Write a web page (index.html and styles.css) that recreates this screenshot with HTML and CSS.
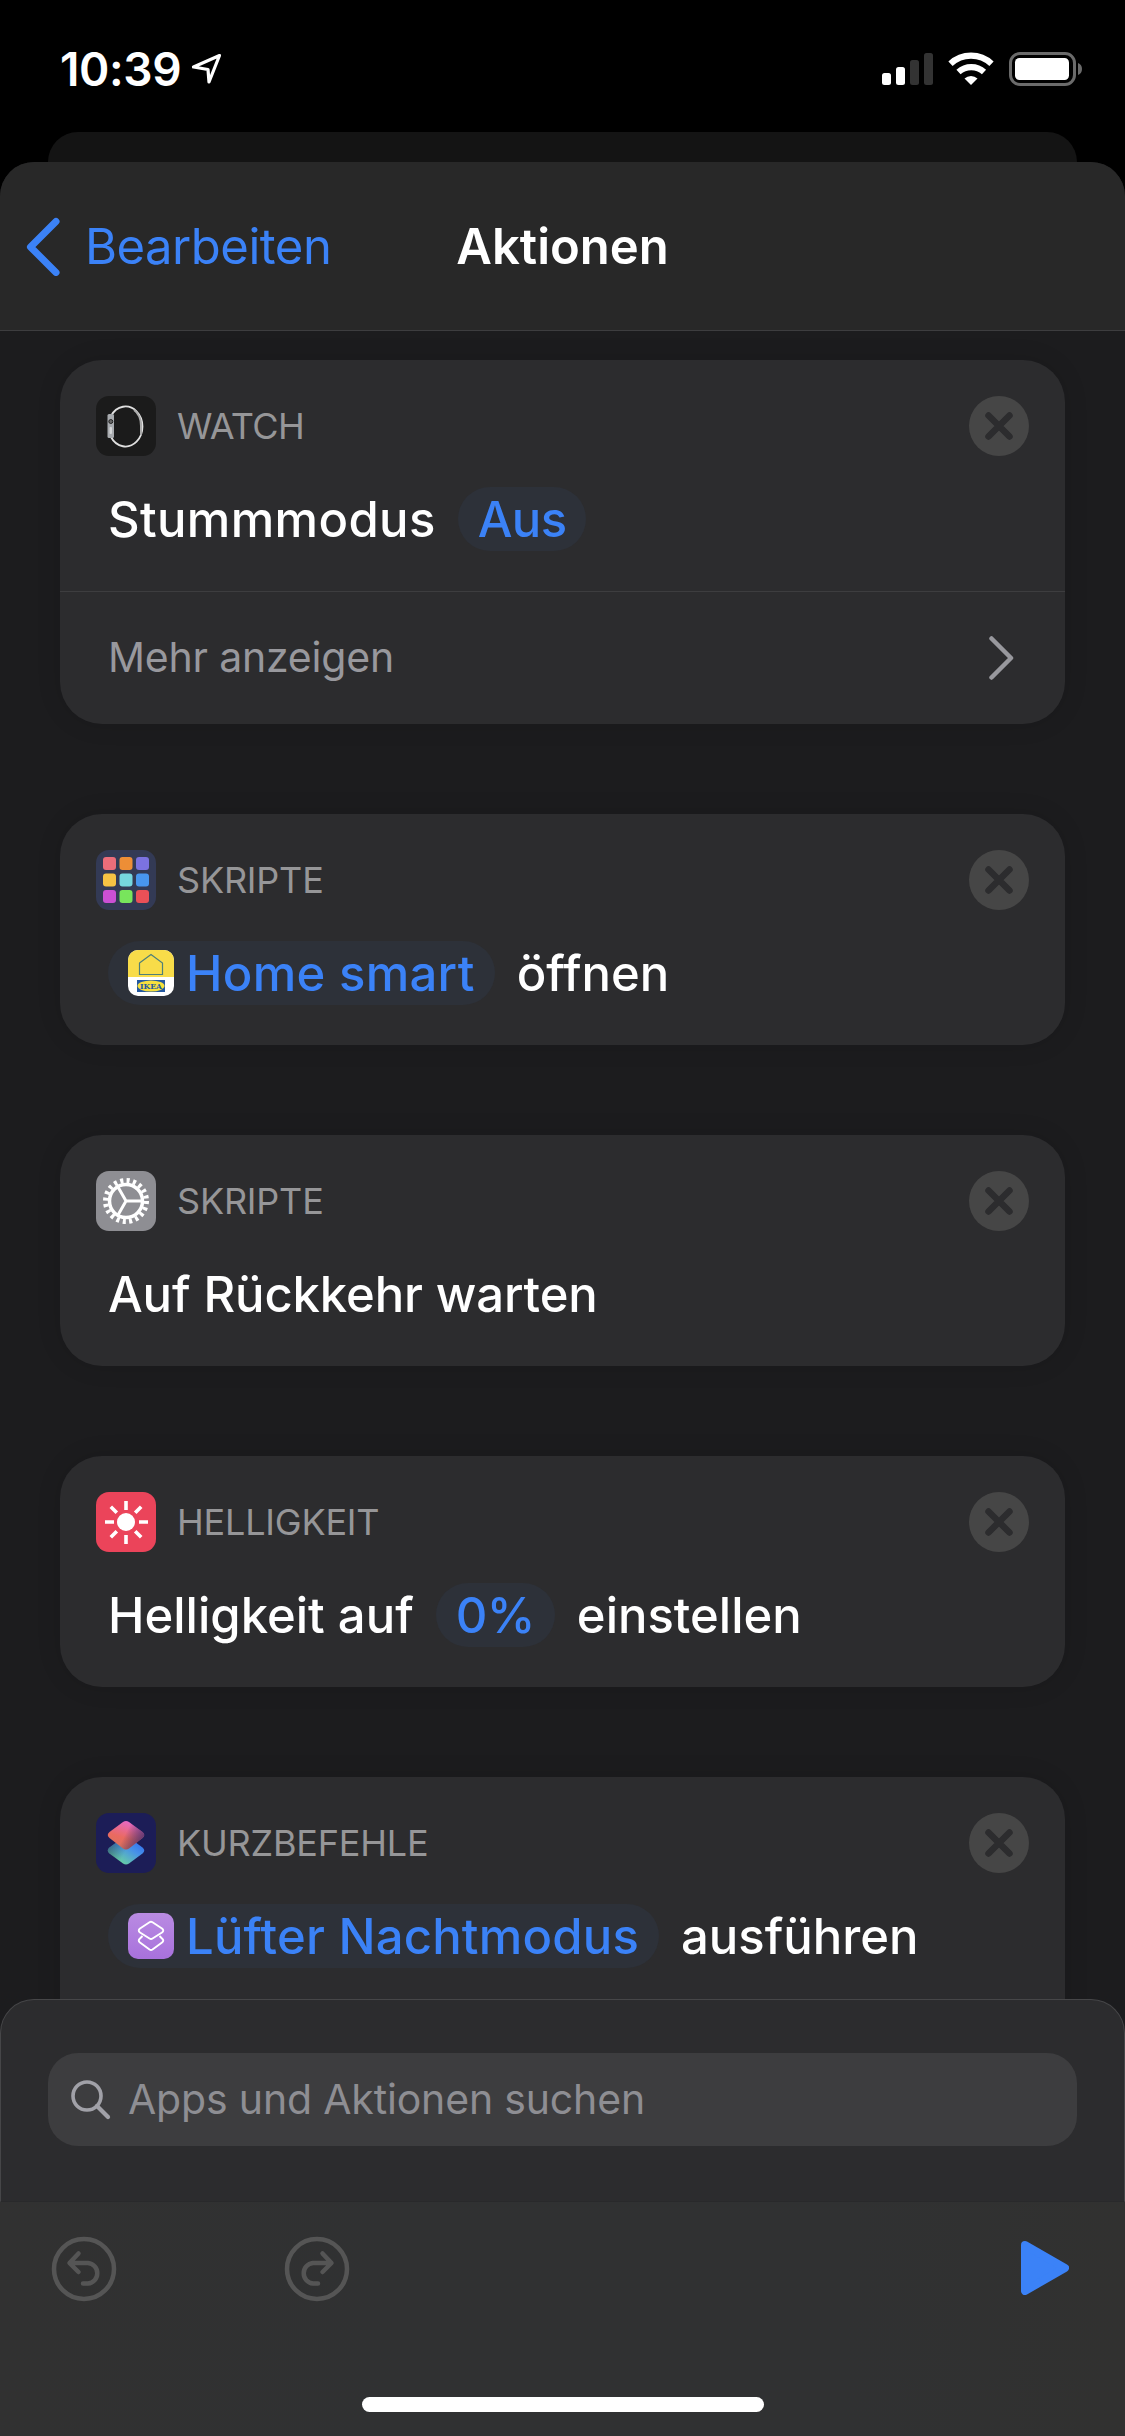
FILE: index.html
```
<!DOCTYPE html>
<html lang="de">
<head>
<meta charset="utf-8">
<title>Aktionen</title>
<link rel="stylesheet" href="styles.css">
</head>
<body>
<div class="screen">
  <div class="status">
    <div class="status-left">
      <span class="time">10:39</span>
      <svg class="loc" width="32" height="32" viewBox="0 0 32 32"><path d="M28.500 2.500 2.500 14 17 16.500 18 29Z" fill="none" stroke="#fff" stroke-width="3.200" stroke-linejoin="round"/></svg>
    </div>
    <svg class="status-right" width="202" height="36" viewBox="0 0 202 36">
      <rect x="0" y="21" width="9" height="12" rx="2.500" fill="#fff"/><rect x="14" y="15" width="9" height="18" rx="2.500" fill="#fff"/>
      <rect x="28" y="8" width="9" height="25" rx="2.500" fill="#333"/><rect x="42" y="1" width="9" height="32" rx="2.500" fill="#333"/>
      <g fill="none" stroke="#fff" stroke-width="6.200"><path d="M68.500 11.800a30 30 0 0 1 41 0"/><path d="M76.500 20a19 19 0 0 1 25.500 0"/></g>
      <path d="M89 33l-6.500-6.500a9.500 9.500 0 0 1 13 0z" fill="#fff"/>
      <rect x="128.500" y="1.500" width="64" height="31" rx="9.500" fill="none" stroke="#6b6b6b" stroke-width="3"/><rect x="133" y="6" width="54" height="22" rx="4.500" fill="#fff"/><path d="M196 11a6.500 6.500 0 0 1 0 12z" fill="#6b6b6b"/>
    </svg>
  </div>
  <div class="behind"></div>
  <div class="sheet">
    <header class="nav">
      <div class="back">
        <svg width="36" height="60" viewBox="0 0 36 60"><path d="M31 5.500 5.500 31 31 56.500" fill="none" stroke="#3b82f7" stroke-width="7" stroke-linecap="round" stroke-linejoin="round"/></svg>
        <span class="back-label">Bearbeiten</span>
      </div>
      <h1 class="title">Aktionen</h1>
    </header>
    <main class="list">
      <section class="card">
        <div class="card-head">
          <svg class="app" viewBox="0 0 60 60"><rect width="60" height="60" rx="13" fill="#1b1b1b"/><path d="M15 20A17 20 0 1 1 15 41" fill="none" stroke="#e0e0e0" stroke-width="1.800"/><path d="M38 14q7 5 7 16v9" fill="none" stroke="#aaa" stroke-width="2"/><rect x="11.500" y="18" width="6.500" height="24" rx="1.500" fill="#a8abaf"/><circle cx="14.800" cy="25.500" r="2" fill="#666" stroke="#222"/><rect x="13.500" y="31" width="2.500" height="7" rx="1" fill="#d4d6d8"/></svg>
          <span class="label w-watch">WATCH</span>
          <svg class="close" viewBox="0 0 60 60"><circle cx="30" cy="30" r="30" fill="#464646"/><path d="M19.500 19.500l21 21m0-21l-21 21" stroke="#2c2c2e" stroke-width="6.500" stroke-linecap="round"/></svg>
        </div>
        <div class="line"><span class="txt t-stumm">Stummmodus</span><span class="pill"><span class="txt t-aus">Aus</span></span></div>
        <div class="more"><span class="more-label">Mehr anzeigen</span><svg width="26" height="44" viewBox="0 0 26 44"><path d="M2.500 2.500 22 22 2.500 41.500" fill="none" stroke="#98989d" stroke-width="4.500" stroke-linecap="round" stroke-linejoin="round"/></svg></div>
      </section>
      <section class="card">
        <div class="card-head">
          <svg class="app" viewBox="0 0 60 60"><rect width="60" height="60" rx="13" fill="#333a55"/><rect x="7" y="7" width="13" height="13" rx="3" fill="#ec6d7a"/><rect x="23.500" y="7" width="13" height="13" rx="3" fill="#ed8e36"/><rect x="40" y="7" width="13" height="13" rx="3" fill="#7b72e0"/><rect x="7" y="23.500" width="13" height="13" rx="3" fill="#f6c344"/><rect x="23.500" y="23.500" width="13" height="13" rx="3" fill="#76d6df"/><rect x="40" y="23.500" width="13" height="13" rx="3" fill="#4896ef"/><rect x="7" y="40" width="13" height="13" rx="3" fill="#cb50d4"/><rect x="23.500" y="40" width="13" height="13" rx="3" fill="#78e55c"/><rect x="40" y="40" width="13" height="13" rx="3" fill="#eb5057"/></svg>
          <span class="label w-long">SKRIPTE</span>
          <svg class="close" viewBox="0 0 60 60"><circle cx="30" cy="30" r="30" fill="#464646"/><path d="M19.500 19.500l21 21m0-21l-21 21" stroke="#2c2c2e" stroke-width="6.500" stroke-linecap="round"/></svg>
        </div>
        <div class="line"><span class="pill pill-icon">
          <svg class="mini" viewBox="0 0 46 46"><defs><clipPath id="mini-clip"><rect width="46" height="46" rx="10"/></clipPath></defs><g clip-path="url(#mini-clip)"><rect width="46" height="46" fill="#fff"/><rect width="46" height="27" fill="#f8dc49"/></g><path d="M11.500 13 23 4.500 34.500 13V24.500H11.500Z" fill="none" stroke="#4f7f78" stroke-width="1.200"/><rect x="9" y="30" width="28" height="12" fill="#2358a0"/><ellipse cx="23" cy="36" rx="13.500" ry="5.500" fill="#f6df3d"/><text x="23" y="38.800" text-anchor="middle" textLength="22" lengthAdjust="spacingAndGlyphs" class="brand">IKEA</text></svg>
          <span class="txt t-home">Home smart</span></span><span class="txt">öffnen</span></div>
      </section>
      <section class="card">
        <div class="card-head">
          <svg class="app" viewBox="0 0 60 60"><rect width="60" height="60" rx="13" fill="#8e8e93"/><circle cx="30" cy="30" r="16.500" fill="none" stroke="#fff" stroke-width="3.500"/><circle cx="30" cy="30" r="20.500" fill="none" stroke="#fff" stroke-width="5" stroke-dasharray="3.100 3.340"/><path d="M46 30H30L22 16M30 30l-8 14" fill="none" stroke="#fff" stroke-width="3"/></svg>
          <span class="label w-long">SKRIPTE</span>
          <svg class="close" viewBox="0 0 60 60"><circle cx="30" cy="30" r="30" fill="#464646"/><path d="M19.500 19.500l21 21m0-21l-21 21" stroke="#2c2c2e" stroke-width="6.500" stroke-linecap="round"/></svg>
        </div>
        <div class="line"><span class="txt t-auf">Auf Rückkehr warten</span></div>
      </section>
      <section class="card">
        <div class="card-head">
          <svg class="app" viewBox="0 0 60 60"><rect width="60" height="60" rx="13" fill="#eb445a"/><circle cx="30" cy="30" r="9" fill="#fff"/><path d="M30 9v9M30 43v9M9 30h9M43 30h9M14.800 14.800l6 6M39.200 39.200l6 6M45.200 14.800l-6 6M20.800 39.200l-6 6" stroke="#fff" stroke-width="3.600"/></svg>
          <span class="label w-long">HELLIGKEIT</span>
          <svg class="close" viewBox="0 0 60 60"><circle cx="30" cy="30" r="30" fill="#464646"/><path d="M19.500 19.500l21 21m0-21l-21 21" stroke="#2c2c2e" stroke-width="6.500" stroke-linecap="round"/></svg>
        </div>
        <div class="line"><span class="txt">Helligkeit auf</span><span class="pill"><span class="txt t-null">0%</span></span><span class="txt">einstellen</span></div>
      </section>
      <section class="card card-last">
        <div class="card-head">
          <svg class="app" viewBox="0 0 60 60"><defs><linearGradient id="low" x1="1" y1="0.200" x2="0.300" y2="1"><stop offset="0" stop-color="#2f6bf0"/><stop offset=".4" stop-color="#4791e8"/><stop offset="1" stop-color="#6cd79a"/></linearGradient><linearGradient id="lowshade" x1="0" y1=".3" x2=".5" y2=".5"><stop offset="0" stop-color="#1e2a5a" stop-opacity=".6"/><stop offset="1" stop-color="#1e2a5a" stop-opacity="0"/></linearGradient><linearGradient id="top" x1="0.700" y1="0" x2="0.300" y2="1"><stop offset="0" stop-color="#e569cf"/><stop offset=".6" stop-color="#ea6a60"/><stop offset="1" stop-color="#d8735c"/></linearGradient><linearGradient id="shade" x1="0.500" y1=".4" x2="1" y2=".6"><stop offset="0" stop-color="#1e1e5a" stop-opacity="0"/><stop offset="1" stop-color="#3c2a6c" stop-opacity=".8"/></linearGradient></defs><rect width="60" height="60" rx="13" fill="#1c1d57"/><path id="rhomb-low" d="M27 24.500 13.500 34.500q-3.500 3 0 6L27 50.500q3 2 6 0L46.500 40.500q3.500-3 0-6L33 24.500q-3-2-6 0Z" fill="url(#low)"/><path d="M27 24.500 13.500 34.500q-3.500 3 0 6L27 50.500q3 2 6 0L46.500 40.500q3.500-3 0-6L33 24.500q-3-2-6 0Z" fill="url(#lowshade)"/><path d="M27 9 13.500 19q-3.500 3 0 6L27 35.500q3 2 6 0L46.500 25q3.500-3 0-6L33 9q-3-2-6 0Z" fill="url(#top)"/><path d="M27 9 13.500 19q-3.500 3 0 6L27 35.500q3 2 6 0L46.500 25q3.500-3 0-6L33 9q-3-2-6 0Z" fill="url(#shade)"/></svg>
          <span class="label w-long">KURZBEFEHLE</span>
          <svg class="close" viewBox="0 0 60 60"><circle cx="30" cy="30" r="30" fill="#464646"/><path d="M19.500 19.500l21 21m0-21l-21 21" stroke="#2c2c2e" stroke-width="6.500" stroke-linecap="round"/></svg>
        </div>
        <div class="line"><span class="pill pill-icon">
          <svg class="mini" viewBox="0 0 46 46"><defs><linearGradient id="lilac" x2="0" y2="1"><stop stop-color="#b98be2"/><stop offset="1" stop-color="#a871dc"/></linearGradient></defs><rect width="46" height="46" rx="10" fill="url(#lilac)"/><g fill="none" stroke="#fff" stroke-width="1.900" stroke-linejoin="round"><path d="M21.500 9.200 12 15.500q-2.500 2 0 4L21.500 25.500q1.500 1 3 0L34 19.500q2.500-2 0-4L24.500 9.200q-1.500-1-3 0Z"/><path d="M14.500 23 12 25.500q-2.500 2 0 4l9.500 7q1.500 1 3 0l9.500-7q2.500-2 0-4L31.500 23"/></g></svg>
          <span class="txt t-luft">Lüfter Nachtmodus</span></span><span class="txt">ausführen</span></div>
      </section>
    </main>
    <div class="drawer">
      <div class="search"><svg width="40" height="40" viewBox="0 0 40 40"><circle cx="16" cy="16" r="14" fill="none" stroke="#a1a1a8" stroke-width="3.600"/><path d="M26 26l11 11" stroke="#a1a1a8" stroke-width="4.200" stroke-linecap="round"/></svg><span class="placeholder">Apps und Aktionen suchen</span></div>
    </div>
    <footer class="toolbar">
      <div class="tools">
        <svg class="undo" width="66" height="66" viewBox="0 0 66 66"><g fill="none" stroke="#555" stroke-width="4.500" stroke-linecap="round" stroke-linejoin="round"><circle cx="33" cy="33" r="30"/><path d="M27.500 17.500 18.500 27l9 9M19 27h18a10.300 10.300 0 0 1 0 20.500h-5"/></g></svg>
        <svg class="redo" width="66" height="66" viewBox="0 0 66 66"><g fill="none" stroke="#555" stroke-width="4.500" stroke-linecap="round" stroke-linejoin="round"><circle cx="33" cy="33" r="30"/><path d="M38.500 17.500 47.500 27l-9 9M47 27H29a10.300 10.300 0 0 0 0 20.500h5"/></g></svg>
        <svg class="play" width="48" height="54" viewBox="0 0 48 54"><path d="M4 4 44 27 4 50Z" fill="#3b82f7" stroke="#3b82f7" stroke-width="8" stroke-linejoin="round"/></svg>
      </div>
      <div class="home"></div>
    </footer>
  </div>
</div>
</body>
</html>
```
FILE: styles.css
```
* { box-sizing: border-box; }
body { margin: 0; background: #000; font-family: Inter, "Liberation Sans", sans-serif; }
svg { display: block; flex: none; }
.screen { width: 1125px; height: 2436px; overflow: hidden; background: #000; display: flex; flex-direction: column; }
.status { height: 132px; flex: none; display: flex; justify-content: space-between; padding: 0 41px 0 60px; }
.status-left { display: flex; align-items: flex-start; padding-top: 39px; }
.time { font-size: 46px; line-height: 60px; font-weight: 600; letter-spacing: -0.4px; color: #fff; width: 131px; white-space: nowrap; }
.loc { margin-top: 14px; }
.status-right { margin-top: 52px; }
.behind { height: 30px; flex: none; margin: 0 48px; background: #141414; border-radius: 30px 30px 0 0; }
.sheet { flex: 1; min-height: 0; display: flex; flex-direction: column; background: #1c1c1e; border-radius: 34px 34px 0 0; overflow: hidden; }
.nav { height: 169px; flex: none; background: #282828; border-bottom: 1px solid #3d3d3f; display: grid; grid-template-columns: 1fr auto 1fr; align-items: center; padding: 0 25px; }
.back { display: flex; align-items: center; gap: 24px; color: #3b82f7; }
.back-label { font-size: 49px; line-height: 60px; letter-spacing: -0.5px; padding-top: 2px; white-space: nowrap; }
.title { margin: 0; padding-top: 2px; font-size: 49px; line-height: 60px; font-weight: 600; color: #fff; white-space: nowrap; }
.list { height: 1668px; flex: none; padding: 29px 60px 0; display: flex; flex-direction: column; gap: 90px; overflow: hidden; }
.card { flex: none; background: #2c2c2e; border-radius: 42px; box-shadow: 0 0 24px rgba(0,0,0,.12); overflow: hidden; }
.card-last { padding-bottom: 60px; }
.card-head { display: flex; align-items: center; padding: 36px 36px 0; }
.app, .close { width: 60px; height: 60px; }
.label { flex: 1; margin-left: 21px; font-size: 36px; line-height: 44px; color: #969698; white-space: nowrap; }
.w-watch { letter-spacing: -0.7px; }
.w-long { letter-spacing: -0.2px; }
.line { display: flex; align-items: center; height: 135px; padding: 0 48px 9px; gap: 22px; font-size: 49px; line-height: 60px; font-weight: 500; color: #fff; white-space: nowrap; }
.txt { padding-top: 2px; }
.t-stumm { letter-spacing: 0.35px; }
.t-aus, .t-null { letter-spacing: -0.6px; }
.t-home { letter-spacing: 0.3px; }
.t-luft { letter-spacing: 0.2px; }
.t-auf { letter-spacing: -0.12px; }
.pill { display: flex; align-items: center; height: 64px; padding: 0 20px; border-radius: 32px; background: #2d3139; color: #3b82f7; }
.pill-icon { gap: 12px; }
.mini { width: 46px; height: 46px; }
.brand { font-family: "DejaVu Serif", serif; font-size: 8px; font-weight: 700; fill: #2358a0; }
.more { height: 133px; border-top: 1px solid #3d3d3f; display: flex; align-items: center; justify-content: space-between; padding: 0 50px 0 48px; }
.more-label { font-size: 41px; line-height: 50px; letter-spacing: -0.2px; padding-bottom: 2px; color: #98989d; white-space: nowrap; }
.drawer { height: 203px; flex: none; background: #2c2c2e; border: 1px solid #464648; border-bottom-color: #29292b; border-radius: 34px 34px 0 0; padding: 53px 47px 0; }
.search { height: 93px; border-radius: 30px; background: #3d3d3f; display: flex; align-items: center; padding-left: 23px; gap: 17px; }
.placeholder { font-size: 41px; line-height: 50px; letter-spacing: -0.17px; padding-bottom: 2px; color: #8e8e93; white-space: nowrap; }
.toolbar { height: 234px; flex: none; background: linear-gradient(90deg,#313131,#303132 35%,#303132 75%,#313130); display: flex; flex-direction: column; align-items: center; }
.tools { align-self: stretch; height: 195px; display: flex; align-items: flex-start; padding: 34px 56px 0 51px; }
.redo { margin-left: 167px; }
.play { margin: 5px 0 0 auto; }
.home { width: 402px; height: 15px; border-radius: 8px; background: #fff; }
```
